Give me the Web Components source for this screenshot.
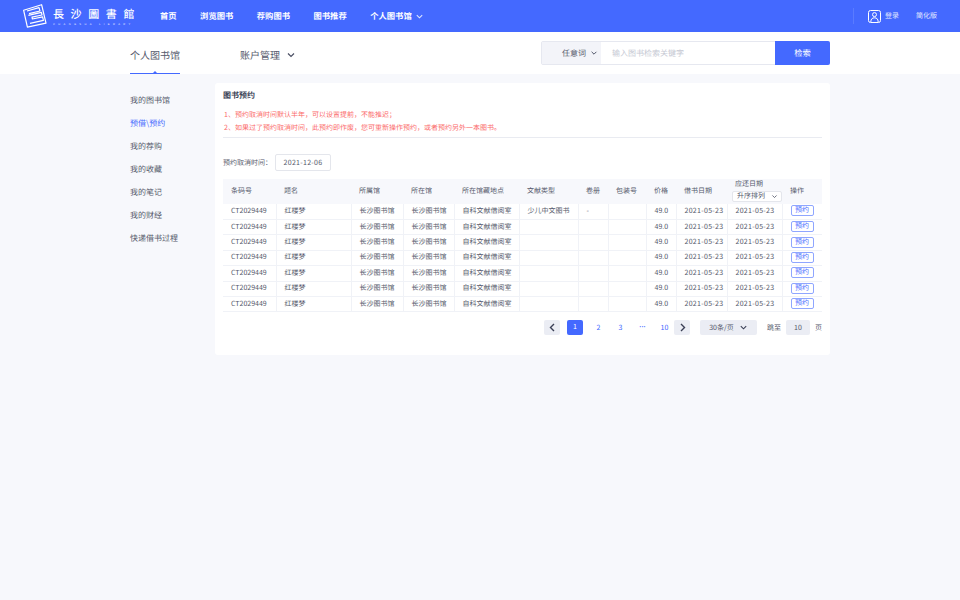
<!DOCTYPE html>
<html lang="zh">
<head>
<meta charset="utf-8">
<title>图书预约</title>
<style>
  html, body { margin: 0; height: 100%; background: #f7f8fc; }
  body { font-family: "Noto Sans CJK SC", "Noto Sans", sans-serif; color: #4a4f63; overflow: hidden; text-rendering: geometricPrecision; }
  .wrap { display: flex; width: 700px; margin-left: 130px; }
</style>
</head>
<body>
<lib-header></lib-header>
<lib-subnav></lib-subnav>
<div class="wrap">
  <lib-sidemenu></lib-sidemenu>
  <lib-panel></lib-panel>
</div>

<script>
const chevron = (w, c) => `<svg width="${w}" height="${w}" viewBox="0 0 10 10" fill="none" stroke="${c}" stroke-width="1.2"><path d="M2 3.5 5 6.5 8 3.5"/></svg>`;

class LibHeader extends HTMLElement {
    constructor() {
        super();
        this.attachShadow({ mode: 'open' });
    }
    connectedCallback() {
        this.shadowRoot.innerHTML = `
      <style>
        :host { display: flex; align-items: center; height: 32px; background: #4469ff; color: #fff; font-size: 8.3px; padding: 0 23px; }
        .logo { display: flex; align-items: center; gap: 6px; width: 137px; }
        .names { display: flex; flex-direction: column; gap: 3px; margin-top: 1px; }
        .cn { font: 500 11px/12px "Noto Sans CJK TC", sans-serif; letter-spacing: 6.6px; white-space: nowrap; }
        .en { font: 2.6px/3px "Liberation Sans", sans-serif; letter-spacing: 3.4px; white-space: nowrap; opacity: .9; }
        nav { display: flex; gap: 23.5px; font-weight: 700; }
        nav span { display: flex; align-items: center; gap: 3px; white-space: nowrap; }
        .right { margin-left: auto; display: flex; align-items: center; font-size: 7px; color: #e6ebff; }
        .rule { width: 1px; height: 16px; background: #5a7bff; margin-right: 14px; }
        .user { display: flex; align-items: center; gap: 4px; margin-right: 17px; }
      </style>
      <div class="logo">
        <svg width="24" height="24" viewBox="0 0 24 24" fill="none" stroke="#fff" stroke-width="1.2" stroke-linejoin="round">
          <path d="M.6 6.2 18.6.7 23 19.2 4.4 23.2Z"/>
          <path d="M4 7 16 3.6 17 7 6 9.6M5.4 11.4 18.4 8.4 19 11 9 13.2 9.4 15 19.6 12.8 20.4 16.4 7 19.4"/>
        </svg>
        <div class="names">
          <span class="cn">長沙圖書館</span>
          <span class="en">CHANGSHA LIBRARY</span>
        </div>
      </div>
      <nav>
        <span>首页</span><span>浏览图书</span><span>荐购图书</span><span>图书推荐</span>
        <span>个人图书馆 ${chevron(9, '#dfe6ff')}</span>
      </nav>
      <div class="right">
        <div class="rule"></div>
        <div class="user">
          <svg width="13" height="13" viewBox="0 0 13 13" fill="none" stroke="#fff" stroke-width="1"><rect x=".5" y=".5" width="12" height="12" rx="2"/><circle cx="6.5" cy="4.6" r="2"/><path d="M2.8 12c0-3 1.5-4.2 3.7-4.2s3.7 1.2 3.7 4.2"/></svg>
          <span>登录</span>
        </div>
        <span>简化版</span>
      </div>`;
    }
}

class LibSubnav extends HTMLElement {
    constructor() {
        super();
        this.attachShadow({ mode: 'open' });
    }
    connectedCallback() {
        this.shadowRoot.innerHTML = `
      <style>
        :host { display: flex; align-items: center; height: 42px; background: #fff; padding: 0 130px; box-sizing: border-box; width: 960px; font-size: 10px; color: #555a6c; }
        .tab { align-self: stretch; display: flex; align-items: center; width: 50px; padding-top: 3px; white-space: nowrap; border-bottom: 1px solid #4469ff; box-sizing: border-box; position: relative; }
        .tab::after { content: ''; position: absolute; left: 23px; bottom: 0; border: 2px solid transparent; border-bottom-color: #4469ff; border-top: 0; }
        .acct { display: flex; align-items: center; gap: 6px; margin-left: 60px; padding-top: 3px; white-space: nowrap; }
        .search { margin-left: auto; display: flex; width: 289px; height: 24px; box-sizing: border-box; border: 1px solid #e6e8f0; border-radius: 2px; font-size: 8px; }
        .kind { width: 59px; background: #f3f4f9; display: flex; align-items: center; justify-content: flex-end; gap: 4px; padding-right: 3px; box-sizing: border-box; }
        .input { flex: 1; display: flex; align-items: center; padding-left: 11px; color: #c5c8d3; }
        .btn { width: 55px; margin: -1px; background: #4469ff; color: #fff; font-size: 8.3px; display: flex; align-items: center; justify-content: center; border-radius: 0 2px 2px 0; }
      </style>
      <div class="tab">个人图书馆</div>
      <div class="acct">账户管理 ${chevron(10, '#4a4f63')}</div>
      <div class="search">
        <div class="kind">任意词 ${chevron(8, '#4a4f63')}</div>
        <div class="input">输入图书检索关键字</div>
        <div class="btn">检索</div>
      </div>`;
    }
}

class LibSidemenu extends HTMLElement {
    constructor() {
        super();
        this.attachShadow({ mode: 'open' });
    }
    connectedCallback() {
        const items = ['我的图书馆', '预借\\预约', '我的荐购', '我的收藏', '我的笔记', '我的财经', '快递借书过程'];
        this.shadowRoot.innerHTML = `
      <style>
        :host { display: flex; flex-direction: column; width: 85px; padding-top: 15px; font-size: 8px; color: #55596b; }
        div { height: 23px; line-height: 23px; white-space: nowrap; }
        .on { color: #4469ff; }
      </style>
      ${items.map((t, i) => `<div class="${i === 1 ? 'on' : ''}">${t}</div>`).join('')}`;
    }
}

class LibPanel extends HTMLElement {
    constructor() {
        super();
        this.attachShadow({ mode: 'open' });
    }
    connectedCallback() {
        this.shadowRoot.innerHTML = `
      <style>
        :host { display: block; width: 615px; height: 272px; margin-top: 9px; background: #fff; border-radius: 3px; padding: 0 8px; box-sizing: border-box; }
        h2 { margin: 0; padding-top: 7px; height: 26px; box-sizing: border-box; font-size: 8px; line-height: 12px; font-weight: 700; color: #3a3f55; }
        .note { color: #fb6a6a; font-size: 7px; line-height: 12.5px; padding-left: 1px; height: 29px; box-sizing: border-box; border-bottom: 1px solid #e9ebf1; }
        .date { display: flex; align-items: center; gap: 3px; margin-top: 16px; font-size: 7px; color: #55596b; }
        .date b { font-weight: 400; width: 56px; height: 17px; border: 1px solid #e4e6ec; border-radius: 2px; box-sizing: border-box; display: flex; align-items: center; justify-content: center; letter-spacing: .3px; }
      </style>
      <h2>图书预约</h2>
      <div class="note">1、预约取消时间默认半年，可以设置提前，不能推迟；<br>2、如果过了预约取消时间，此预约即作废，您可重新操作预约，或者预约另外一本图书。</div>
      <div class="date"><span>预约取消时间：</span><b>2021-12-06</b></div>
      <book-table></book-table>
      <page-bar></page-bar>`;
    }
}

class BookTable extends HTMLElement {
    constructor() {
        super();
        this.attachShadow({ mode: 'open' });
    }
    connectedCallback() {
        const widths = [53, 75, 52, 51, 65, 59, 30, 38, 30, 51, 55, 40];
        const heads = ['条码号', '题名', '所属馆', '所在馆', '所在馆藏地点', '文献类型', '卷册', '包装号', '价格', '借书日期', '', '操作'];
        const day = '<span class="day">2021-05-23</span>';
        const row = (i) => {
            const cells = ['CT2029449', '红楼梦', '长沙图书馆', '长沙图书馆', '自科文献借阅室',
                i === 0 ? '少儿中文图书' : '', i === 0 ? '-' : '', '', '49.0', day, day, '<i>预约</i>'];
            return `<tr>${cells.map(c => `<td>${c}</td>`).join('')}</tr>`;
        };
        this.shadowRoot.innerHTML = `
      <style>
        :host { display: block; margin-top: 8px; font-size: 7px; color: #55596b; }
        table { border-collapse: collapse; table-layout: fixed; width: 599px; }
        th { font-weight: 400; background: #f7f8fc; height: 25px; padding: 0 0 1px 8px; box-sizing: border-box; text-align: left; white-space: nowrap; line-height: 9px; }
        td { height: 15.43px; padding: 0 0 1px 8px; border: 1px solid #f0f2f7; border-top: 0; white-space: nowrap; line-height: 10px; box-sizing: border-box; }
        td:first-child { border-left: 0; }
        td:last-child { border-right: 0; }
        .day { letter-spacing: .3px; }
        i { font-style: normal; display: block; width: 23px; height: 11px; line-height: 9px; box-sizing: border-box; border: 1px solid #8fa6ff; border-radius: 2px; color: #4469ff; text-align: center; }
        .due { display: flex; flex-direction: column; gap: 1.5px; }
        .sort { display: flex; align-items: center; justify-content: space-between; width: 50px; height: 11px; margin-left: -3px; box-sizing: border-box; border: 1px solid #e4e6ec; border-radius: 2px; padding: 0 3px 0 4px; background: #fff; }
      </style>
      <table>
        <colgroup>${widths.map(w => `<col style="width:${w}px">`).join('')}</colgroup>
        <tr>${heads.map((h, i) => i === 10
            ? `<th><div class="due"><span>应还日期</span><div class="sort">升序排列 ${chevron(7, '#55596b')}</div></div></th>`
            : `<th>${h}</th>`).join('')}</tr>
        ${[0, 1, 2, 3, 4, 5, 6].map(row).join('')}
      </table>`;
    }
}

class PageBar extends HTMLElement {
    constructor() {
        super();
        this.attachShadow({ mode: 'open' });
    }
    connectedCallback() {
        this.shadowRoot.innerHTML = `
      <style>
        :host { display: flex; align-items: center; width: 599px; justify-content: flex-end; margin-top: 8px; height: 15px; font-size: 7px; color: #55596b; }
        .arrow, .box { background: #ebedf4; border-radius: 2px; height: 15px; display: flex; align-items: center; justify-content: center; box-sizing: border-box; }
        .arrow { width: 16px; }
        .n { width: 22px; text-align: center; color: #4469ff; }
        .n:last-of-type { margin-right: -1.5px; }
        .dots { font-family: "Liberation Sans", sans-serif; font-weight: 700; letter-spacing: -.2px; }
        .cur { width: 16px; height: 15px; line-height: 15px; border-radius: 2px; background: #4469ff; color: #fff; text-align: center; margin: 0 4.5px 0 7px; }
        .size { width: 57px; gap: 5px; margin: 0 10px; }
        .jump { width: 24px; margin: 0 5px; }
        em { font-style: normal; }
      </style>
      <div class="arrow"><svg width="9" height="9" viewBox="0 0 9 9" fill="none" stroke="#3a3f55" stroke-width="1.4"><path d="M6 1 2.5 4.5 6 8"/></svg></div>
      <span class="cur">1</span>
      <span class="n">2</span><span class="n">3</span><span class="n dots">···</span><span class="n">10</span>
      <div class="arrow"><svg width="9" height="9" viewBox="0 0 9 9" fill="none" stroke="#3a3f55" stroke-width="1.4"><path d="M3 1 6.5 4.5 3 8"/></svg></div>
      <div class="box size">30条/页 ${chevron(9, '#3a3f55')}</div>
      <em>跳至</em>
      <div class="box jump">10</div>
      <em>页</em>`;
    }
}

customElements.define('lib-header', LibHeader);
customElements.define('lib-subnav', LibSubnav);
customElements.define('lib-sidemenu', LibSidemenu);
customElements.define('lib-panel', LibPanel);
customElements.define('book-table', BookTable);
customElements.define('page-bar', PageBar);
</script>
</body>
</html>
